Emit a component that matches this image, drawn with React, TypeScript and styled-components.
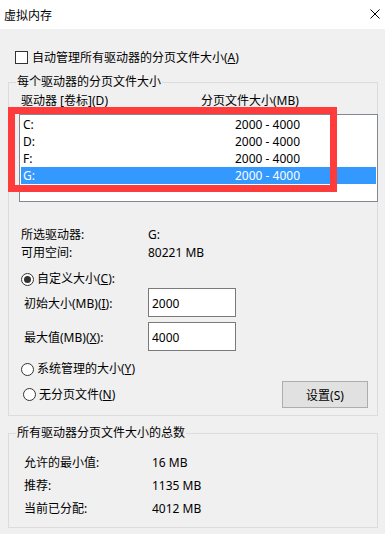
import React from 'react';
import styled, { createGlobalStyle } from 'styled-components';

const GlobalStyle = createGlobalStyle`
  html, body {
    margin: 0;
    padding: 0;
    background: #f0f0f0;
  }
  body {
    font-family: "Noto Sans", "Noto Sans CJK SC", "Microsoft YaHei", sans-serif;
    font-size: 12px;
    color: #000;
  }
  * {
    box-sizing: border-box;
  }
`;

const Dialog = styled.div`
  width: 385px;
  height: 534px;
  background: #f0f0f0;
  display: flex;
  flex-direction: column;
  overflow: hidden;
`;

const TitleBar = styled.div`
  height: 29px;
  flex: none;
  background: #fff;
  display: flex;
  align-items: center;
  justify-content: space-between;
  padding: 0 5px 0 4px;
`;

const Title = styled.span`
  line-height: 17px;
  margin-top: 1px;
`;

const CloseButton = styled.span`
  display: flex;
  width: 10px;
  height: 10px;
  margin-top: -1px;
`;

const Body = styled.div`
  padding: 20px 0 0 8px;
  display: flex;
  flex-direction: column;
`;

const CheckRow = styled.label`
  display: flex;
  align-items: center;
  gap: 4px;
  height: 17px;
  line-height: 17px;
  margin-left: 7px;
`;

const CheckBox = styled.span`
  width: 13px;
  height: 13px;
  border: 1px solid #333;
  background: #fff;
`;

const U = styled.span`
  text-decoration: underline;
  text-underline-offset: 1px;
`;

const Group = styled.fieldset<{ $top: number }>`
  margin: ${(p) => p.$top}px 0 0 0;
  padding: 0;
  width: 370px;
  min-width: 0;
  border: 1px solid #dcdcdc;
`;

const Legend = styled.legend`
  margin-left: 7px;
  padding: 0 1px;
  height: 16px;
  line-height: 16px;
`;

const GroupContent = styled.div<{ $pad: string }>`
  display: flex;
  flex-direction: column;
  padding: ${(p) => p.$pad};
`;

const ListHeader = styled.div`
  display: grid;
  grid-template-columns: 180px auto;
  height: 17px;
  line-height: 17px;
  margin-top: 2px;
  padding-left: 2px;
`;

const ListWrap = styled.div`
  position: relative;
  margin-top: 5px;
  margin-right: -1px;
`;

const ListBox = styled.div`
  height: 88px;
  border: 1px solid #828790;
  background: #fff;
  padding: 1px;
`;

const ListRow = styled.div<{ $selected?: boolean }>`
  display: grid;
  grid-template-columns: 212px auto;
  height: 17px;
  line-height: 17px;
  padding-left: 2px;
  background: ${(p) => (p.$selected ? '#3399ff' : 'transparent')};
  color: ${(p) => (p.$selected ? '#fff' : '#000')};
`;

const Highlight = styled.div`
  position: absolute;
  left: -11px;
  top: -7px;
  width: 329px;
  height: 85px;
  border: 7px solid #ff3b3b;
  pointer-events: none;
`;

const InfoRow = styled.div<{ $top?: number; $label: number; $h: number }>`
  display: grid;
  grid-template-columns: ${(p) => p.$label}px auto;
  height: ${(p) => p.$h}px;
  line-height: ${(p) => p.$h}px;
  margin-top: ${(p) => p.$top ?? 0}px;
  padding-left: 2px;
`;

const RadioRow = styled.label<{ $top: number }>`
  display: flex;
  align-items: center;
  gap: 3px;
  height: 18px;
  line-height: 18px;
  margin-top: ${(p) => p.$top}px;
  padding-left: 2px;
`;

const Radio = styled.span<{ $checked?: boolean }>`
  position: relative;
  width: 13px;
  height: 13px;
  border: 1px solid #333;
  border-radius: 50%;
  background: #fff;

  &::after {
    content: '';
    display: ${(p) => (p.$checked ? 'block' : 'none')};
    position: absolute;
    left: 2px;
    top: 2px;
    width: 7px;
    height: 7px;
    border-radius: 50%;
    background: #333;
  }
`;

const SizeRow = styled.div<{ $top: number }>`
  display: grid;
  grid-template-columns: 124px 88px;
  align-items: center;
  height: 29px;
  margin-top: ${(p) => p.$top}px;
  padding-left: 5px;
`;

const SizeInput = styled.input`
  width: 88px;
  height: 29px;
  border: 1px solid #7a7a7a;
  background: #fff;
  padding: 2px 3px 0;
  margin: 0;
  font: inherit;
  line-height: 17px;
  color: #000;
  outline: none;
  align-self: start;
  vertical-align: top;
`;

const BottomRow = styled.div`
  display: flex;
  align-items: center;
  justify-content: space-between;
  height: 27px;
  margin-top: 3px;
  padding: 0 9px 0 2px;
`;

const SetButton = styled.button`
  width: 86px;
  height: 27px;
  background: #e1e1e1;
  border: 1px solid #adadad;
  font: inherit;
  color: #000;
  padding: 0;
`;

const drives = [
  { name: 'C:', size: '2000 - 4000' },
  { name: 'D:', size: '2000 - 4000' },
  { name: 'F:', size: '2000 - 4000' },
  { name: 'G:', size: '2000 - 4000', selected: true },
];

const totals = [
  { label: '允许的最小值:', value: '16 MB' },
  { label: '推荐:', value: '1135 MB' },
  { label: '当前已分配:', value: '4012 MB' },
];

const App: React.FC = () => {
  return (
    <>
      <GlobalStyle />
      <Dialog>
        <TitleBar>
          <Title>虚拟内存</Title>
          <CloseButton>
            <svg width="10" height="10" viewBox="0 0 10 10">
              <path d="M0.5 0.5 L9.5 9.5 M9.5 0.5 L0.5 9.5" stroke="#000" strokeWidth="1" fill="none" />
            </svg>
          </CloseButton>
        </TitleBar>

        <Body>
          <CheckRow>
            <CheckBox />
            <span>
              自动管理所有驱动器的分页文件大小(<U>A</U>)
            </span>
          </CheckRow>

          <Group $top={8}>
            <Legend>每个驱动器的分页文件大小</Legend>
            <GroupContent $pad="0 0 7px 10px">
              <ListHeader>
                <span>驱动器 [卷标](D)</span>
                <span>分页文件大小(MB)</span>
              </ListHeader>
              <ListWrap>
                <ListBox>
                  {drives.map((d) => (
                    <ListRow key={d.name} $selected={d.selected}>
                      <span>{d.name}</span>
                      <span>{d.size}</span>
                    </ListRow>
                  ))}
                </ListBox>
                <Highlight />
              </ListWrap>

              <InfoRow $top={24} $label={127} $h={18}>
                <span>所选驱动器:</span>
                <span>G:</span>
              </InfoRow>
              <InfoRow $label={127} $h={18}>
                <span>可用空间:</span>
                <span>80221 MB</span>
              </InfoRow>

              <RadioRow $top={8}>
                <Radio $checked />
                <span>
                  自定义大小(<U>C</U>):
                </span>
              </RadioRow>

              <SizeRow $top={0}>
                <span>
                  初始大小(MB)(<U>I</U>):
                </span>
                <SizeInput defaultValue="2000" />
              </SizeRow>
              <SizeRow $top={5}>
                <span>
                  最大值(MB)(<U>X</U>):
                </span>
                <SizeInput defaultValue="4000" />
              </SizeRow>

              <RadioRow $top={9}>
                <Radio />
                <span>
                  系统管理的大小(<U>Y</U>)
                </span>
              </RadioRow>

              <BottomRow>
                <RadioRow $top={0}>
                  <Radio />
                  <span>
                    无分页文件(<U>N</U>)
                  </span>
                </RadioRow>
                <SetButton>设置(S)</SetButton>
              </BottomRow>
            </GroupContent>
          </Group>

          <Group $top={9}>
            <Legend>所有驱动器分页文件大小的总数</Legend>
            <GroupContent $pad="10px 0 7px 13px">
              {totals.map((t) => (
                <InfoRow key={t.label} $label={128} $h={23}>
                  <span>{t.label}</span>
                  <span>{t.value}</span>
                </InfoRow>
              ))}
            </GroupContent>
          </Group>
        </Body>
      </Dialog>
    </>
  );
};

export default App;
